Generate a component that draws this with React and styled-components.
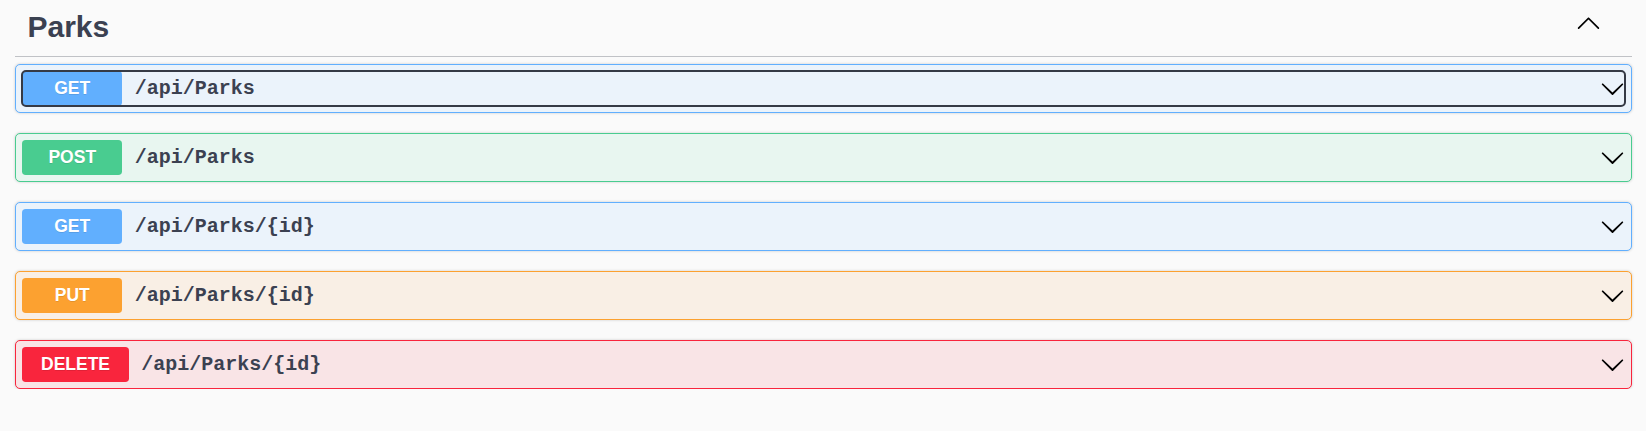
import React from "react";
import styled, { createGlobalStyle } from "styled-components";

const GlobalStyle = createGlobalStyle`
  html, body {
    margin: 0;
    padding: 0;
    background: #fafafa;
  }
  body {
    font-family: "Liberation Sans", Arial, sans-serif;
    color: #3b4151;
  }
`;

// method colours, swagger-ish
const METHODS = {
  GET: { main: "#61affe", bg: "#ebf3fb" },
  POST: { main: "#49cc90", bg: "#e8f6f0" },
  PUT: { main: "#fca130", bg: "#f9efe5" },
  DELETE: { main: "#f9253d", bg: "#f9e4e6" },
};

const operations = [
  { method: "GET", path: "/api/Parks", focused: true },
  { method: "POST", path: "/api/Parks" },
  { method: "GET", path: "/api/Parks/{id}" },
  { method: "PUT", path: "/api/Parks/{id}" },
  { method: "DELETE", path: "/api/Parks/{id}" },
];

const ChevronDown = () => (
  <Arrow viewBox="0 0 20 20" aria-hidden="true">
    <path d="M17.418 6.109c.272-.268.709-.268.979 0s.271.701 0 .969l-7.908 7.83c-.27.268-.707.268-.979 0l-7.908-7.83c-.27-.268-.27-.701 0-.969.271-.268.709-.268.979 0L10 13.25l7.418-7.141z" />
  </Arrow>
);

const ChevronUp = () => (
  <Arrow viewBox="0 0 20 20" aria-hidden="true">
    <path d="M17.418 14.908c.272.268.709.268.979 0s.271-.701 0-.969l-7.908-7.83c-.27-.268-.707-.268-.979 0l-7.908 7.83c-.27.268-.27.701 0 .969.271.268.709.268.979 0L10 7.657l7.418 7.251z" />
  </Arrow>
);

const App = () => {
  return (
    <>
      <GlobalStyle />
      <Page>
        <TagHeader>
          <TagTitle>Parks</TagTitle>
          <ExpandButton>
            <ChevronUp />
          </ExpandButton>
        </TagHeader>

        <OperationList>
          {operations.map((op, index) => (
            <Block key={index} $color={METHODS[op.method].main} $bg={METHODS[op.method].bg}>
              <Control $focused={op.focused}>
                <Method $color={METHODS[op.method].main}>{op.method}</Method>
                <Path>{op.path}</Path>
                <ChevronDown />
              </Control>
            </Block>
          ))}
        </OperationList>
      </Page>
    </>
  );
};

// Styled Components
const Page = styled.div`
  padding: 0 14px 0 15px;
`;

const TagHeader = styled.div`
  display: flex;
  align-items: flex-start;
  padding: 10px 31px 11.5px 12.5px;
  border-bottom: 1px solid rgba(59, 65, 81, 0.3);
  margin-bottom: 7px;
`;

const TagTitle = styled.h3`
  flex: 1;
  margin: 0;
  font-size: 30px;
  font-weight: 700;
  line-height: normal;
  color: #3b4151;
`;

const ExpandButton = styled.div`
  display: flex;
  color: #000;
`;

const Arrow = styled.svg`
  width: 25px;
  height: 25px;
  flex: none;
  fill: currentColor;
`;

const OperationList = styled.div`
  display: flex;
  flex-direction: column;
  gap: 19.5px;
`;

const Block = styled.div`
  border: 1px solid ${(props) => props.$color};
  background: ${(props) => props.$bg};
  border-radius: 5px;
  box-shadow: 0 0 3px rgba(0, 0, 0, 0.19);
  padding: 6.25px;
`;

const Control = styled.div`
  display: flex;
  align-items: center;
  color: #000;
  border-radius: 4px;
  outline: ${(props) => (props.$focused ? "2.5px solid #353a45" : "none")};
  outline-offset: -1.5px;
`;

const Method = styled.span`
  min-width: 100px;
  box-sizing: border-box;
  padding: 7.5px 18.75px;
  border-radius: 3.75px;
  background: ${(props) => props.$color};
  color: #fff;
  font-family: "Liberation Sans", Arial, sans-serif;
  font-size: 17.5px;
  font-weight: 700;
  line-height: 20px;
  text-align: center;
  text-shadow: 0 1px 0 rgba(0, 0, 0, 0.1);
`;

const Path = styled.span`
  flex: 1;
  padding: 0 12.5px;
  font-family: "Liberation Mono", "Courier New", monospace;
  font-size: 20px;
  font-weight: 700;
  color: #3b4151;
`;

export default App;
